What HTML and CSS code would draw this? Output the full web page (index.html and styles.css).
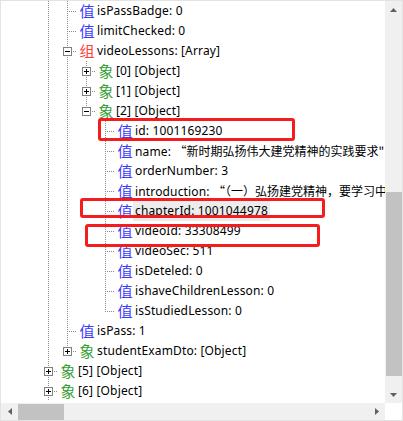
FILE: index.html
```html
<html>
<head>
    <title>JSON Viewer</title>
    <link rel="stylesheet" href="styles.css">
</head>
<body>
    <div class="window">
        <div class="tree">
            <div class="row"><span class="g on"></span><span class="c"></span><span class="ic val">值</span><span class="lbl">isPassBadge: 0</span></div>
            <div class="row"><span class="g on"></span><span class="c"></span><span class="ic val">值</span><span class="lbl">limitChecked: 0</span></div>
            <div class="row"><span class="g on"></span><span class="c"><svg class="box" width="9" height="9"><rect x="0.5" y="0.5" width="8" height="8" fill="#fff" stroke="#808080"/><path d="M2 4.5h5" stroke="#000"/></svg></span><span class="ic arr">组</span><span class="lbl">videoLessons: [Array]</span></div>

            <div class="row"><span class="g on"></span><span class="g on"></span><span class="c"><svg class="box" width="9" height="9"><rect x="0.5" y="0.5" width="8" height="8" fill="#fff" stroke="#808080"/><path d="M2 4.5h5M4.5 2v5" stroke="#000"/></svg></span><span class="ic obj">象</span><span class="lbl">[0] [Object]</span></div>
            <div class="row"><span class="g on"></span><span class="g on"></span><span class="c"><svg class="box" width="9" height="9"><rect x="0.5" y="0.5" width="8" height="8" fill="#fff" stroke="#808080"/><path d="M2 4.5h5M4.5 2v5" stroke="#000"/></svg></span><span class="ic obj">象</span><span class="lbl">[1] [Object]</span></div>
            <div class="row"><span class="g on"></span><span class="g on"></span><span class="c last"><svg class="box" width="9" height="9"><rect x="0.5" y="0.5" width="8" height="8" fill="#fff" stroke="#808080"/><path d="M2 4.5h5" stroke="#000"/></svg></span><span class="ic obj">象</span><span class="lbl">[2] [Object]</span></div>

            <div class="row"><span class="g on"></span><span class="g on"></span><span class="g"></span><span class="c"></span><span class="ic val">值</span><span class="lbl">id: 1001169230</span></div>
            <div class="row"><span class="g on"></span><span class="g on"></span><span class="g"></span><span class="c"></span><span class="ic val">值</span><span class="lbl">name: <span class="zh">“新时期弘扬伟大建党精神的实践要求"</span></span></div>
            <div class="row"><span class="g on"></span><span class="g on"></span><span class="g"></span><span class="c"></span><span class="ic val">值</span><span class="lbl">orderNumber: 3</span></div>
            <div class="row"><span class="g on"></span><span class="g on"></span><span class="g"></span><span class="c"></span><span class="ic val">值</span><span class="lbl">introduction: <span class="zh">“（一）弘扬建党精神，要学习中</span></span></div>
            <div class="row"><span class="g on"></span><span class="g on"></span><span class="g"></span><span class="c"></span><span class="ic val">值</span><span class="lbl selected">chapterId: 1001044978</span></div>
            <div class="row"><span class="g on"></span><span class="g on"></span><span class="g"></span><span class="c"></span><span class="ic val">值</span><span class="lbl">videoId: 33308499</span></div>
            <div class="row"><span class="g on"></span><span class="g on"></span><span class="g"></span><span class="c"></span><span class="ic val">值</span><span class="lbl">videoSec: 511</span></div>
            <div class="row"><span class="g on"></span><span class="g on"></span><span class="g"></span><span class="c"></span><span class="ic val">值</span><span class="lbl">isDeteled: 0</span></div>
            <div class="row"><span class="g on"></span><span class="g on"></span><span class="g"></span><span class="c"></span><span class="ic val">值</span><span class="lbl">ishaveChildrenLesson: 0</span></div>
            <div class="row"><span class="g on"></span><span class="g on"></span><span class="g"></span><span class="c last"></span><span class="ic val">值</span><span class="lbl">isStudiedLesson: 0</span></div>

            <div class="row"><span class="g on"></span><span class="c"></span><span class="ic val">值</span><span class="lbl">isPass: 1</span></div>
            <div class="row"><span class="g on"></span><span class="c last"><svg class="box" width="9" height="9"><rect x="0.5" y="0.5" width="8" height="8" fill="#fff" stroke="#808080"/><path d="M2 4.5h5M4.5 2v5" stroke="#000"/></svg></span><span class="ic obj">象</span><span class="lbl">studentExamDto: [Object]</span></div>

            <div class="row"><span class="c"><svg class="box" width="9" height="9"><rect x="0.5" y="0.5" width="8" height="8" fill="#fff" stroke="#808080"/><path d="M2 4.5h5M4.5 2v5" stroke="#000"/></svg></span><span class="ic obj">象</span><span class="lbl">[5] [Object]</span></div>
            <div class="row"><span class="c"><svg class="box" width="9" height="9"><rect x="0.5" y="0.5" width="8" height="8" fill="#fff" stroke="#808080"/><path d="M2 4.5h5M4.5 2v5" stroke="#000"/></svg></span><span class="ic obj">象</span><span class="lbl">[6] [Object]</span></div>
        </div>

        <div class="vbar">
            <div class="btn"><svg width="7" height="4"><path d="M3.5 0L7 4H0z" fill="#606060"/></svg></div>
            <div class="track"><div class="thumb"></div></div>
            <div class="btn"><svg width="7" height="4"><path d="M0 0h7L3.5 4z" fill="#606060"/></svg></div>
        </div>
        <div class="hbar">
            <div class="btn"><svg width="4" height="7"><path d="M4 0v7L0 3.5z" fill="#606060"/></svg></div>
            <div class="track"><div class="thumb"></div></div>
            <div class="btn"><svg width="4" height="7"><path d="M0 0l4 3.5L0 7z" fill="#606060"/></svg></div>
        </div>
        <div class="corner"></div>

        <div class="mark mark-id"></div>
        <div class="mark mark-chapter"></div>
        <div class="mark mark-video"></div>
    </div>
</body>
</html>
```

FILE: styles.css
```css
body {
    margin: 0;
    background-color: #fff;
    font-family: "Noto Sans", "Noto Sans CJK SC", sans-serif;
}

.window {
    position: relative;
    box-sizing: border-box;
    width: 403px;
    height: 421px;
    border: 1px solid #e3e3e3;
    display: grid;
    grid-template-columns: 384px 17px;
    grid-template-rows: 402px 17px;
    overflow: hidden;
}

.tree {
    padding-left: 38px;
    overflow: hidden;
    background-color: #fff;
}

.row {
    display: flex;
    align-items: center;
    height: 20px;
    white-space: nowrap;
    font-size: 12px;
    color: #000;
}

/* guide column: dotted line of an ancestor that has more siblings */
.g {
    flex: none;
    width: 19px;
    height: 20px;
}

.g.on {
    background: repeating-linear-gradient(to bottom, #8a8a8a 0 1px, transparent 1px 2px) 9px 0 / 1px 100% no-repeat;
}

/* connector: vertical + elbow to the node */
.c {
    flex: none;
    display: flex;
    align-items: center;
    width: 19px;
    height: 20px;
    background:
        repeating-linear-gradient(to right, #8a8a8a 0 1px, transparent 1px 2px) 9px 10px / 11px 1px no-repeat,
        repeating-linear-gradient(to bottom, #8a8a8a 0 1px, transparent 1px 2px) 9px 0 / 1px 100% no-repeat;
}

.c.last {
    background:
        repeating-linear-gradient(to right, #8a8a8a 0 1px, transparent 1px 2px) 9px 10px / 11px 1px no-repeat,
        repeating-linear-gradient(to bottom, #8a8a8a 0 1px, transparent 1px 2px) 9px 0 / 1px 11px no-repeat;
}

.box {
    display: block;
    margin-left: 5px;
}

.ic {
    flex: none;
    width: 16px;
    height: 20px;
    margin-left: 2px;
    margin-right: 2px;
    font-family: "Noto Sans CJK SC", sans-serif;
    font-size: 15px;
    font-weight: 400;
    line-height: 20px;
    text-align: center;
    overflow: hidden;
}

.val {
    color: #3a3aff;
}

.arr {
    color: #ff3b3b;
}

.obj {
    color: #34a034;
}

.lbl {
    line-height: 20px;
    letter-spacing: 0.15px;
}

.zh {
    font-family: "Noto Sans CJK SC", sans-serif;
    letter-spacing: 0;
}

.selected {
    background-color: #ececec;
    padding: 0 2px;
    margin-left: -2px;
}

.vbar {
    display: flex;
    flex-direction: column;
    background-color: #f0f0f0;
}

.hbar {
    display: flex;
    background-color: #f0f0f0;
}

.vbar .btn, .hbar .btn {
    flex: none;
    width: 17px;
    height: 17px;
    display: flex;
    align-items: center;
    justify-content: center;
}

.vbar .track {
    flex: 1;
}

.vbar .thumb {
    margin-top: 174px;
    margin-left: 1px;
    height: 184px;
    background-color: #c2c2c2;
}

.hbar .track {
    flex: 1;
}

.hbar .thumb {
    margin-top: 1px;
    width: 46px;
    height: 16px;
    background-color: #c2c2c2;
}

.corner {
    background-color: #fff;
}

.mark {
    position: absolute;
    box-sizing: border-box;
    border: 3px solid #f41c1c;
    border-radius: 3px;
}

.mark-id {
    left: 97px;
    top: 117px;
    width: 197px;
    height: 23px;
}

.mark-chapter {
    left: 79px;
    top: 197px;
    width: 245px;
    height: 20px;
}

.mark-video {
    left: 84px;
    top: 223px;
    width: 235px;
    height: 23px;
}
```
